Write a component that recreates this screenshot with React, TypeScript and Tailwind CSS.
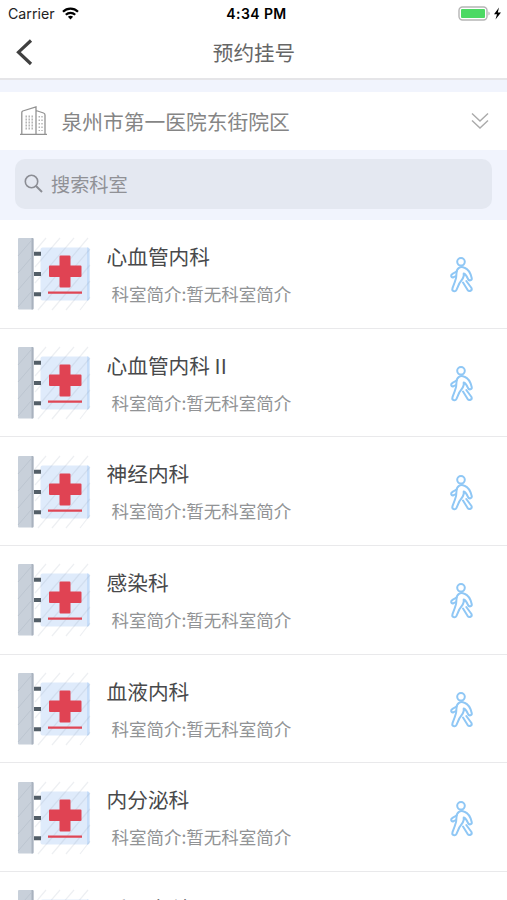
const departments = [
  "心血管内科",
  "心血管内科 II",
  "神经内科",
  "感染科",
  "血液内科",
  "内分泌科",
  "呼吸内科",
];

function StatusBar() {
  return (
    <div className="flex h-[27px] shrink-0 items-center justify-between pl-2 pr-[5px] font-['Inter','Liberation_Sans',sans-serif] text-black">
      <div className="flex w-[120px] items-center gap-[7px]">
        <span className="pt-px text-[14.2px] leading-none text-[#222]">Carrier</span>
        <svg width="17" height="13" viewBox="0 0 17 13" fill="none" stroke="#000" strokeWidth="2.2">
          <path d="M1 4.8C5.2.6 11.8.6 16 4.8" />
          <path d="M3.8 7.8c2.7-2.6 6.7-2.6 9.4 0" />
          <path d="M5.9 9.8c1.5-1.5 3.7-1.5 5.2 0L8.5 12.5z" fill="#000" stroke="none" />
        </svg>
      </div>
      <span className="pl-[3px] text-[14px] font-semibold leading-none tracking-[0.4px]">4:34 PM</span>
      <div className="flex w-[120px] items-center justify-end">
        <svg width="44" height="16" viewBox="0 0 44 16">
          <rect x="1" y="1" width="28" height="13" rx="3.5" fill="#fff" stroke="#b5b5b5" strokeWidth="1.4" />
          <rect x="3" y="3" width="24" height="9" rx="1" fill="#4cd964" />
          <path d="M30.5 5.5v4c1.5-.6 1.5-3.4 0-4z" fill="#aaa" />
          <path d="M41 1.5l-5 6.8h3L37.5 13.5l5.5-7h-3.2z" fill="#000" />
        </svg>
      </div>
    </div>
  );
}

function Header() {
  return (
    <header className="flex h-[53px] shrink-0 items-center border-b-2 border-[#e5e5e8] px-4">
      <svg className="w-[60px]" width="60" height="28" viewBox="0 0 60 28" fill="none" stroke="#404040" strokeWidth="3.2">
        <path d="M15 1.5L2.5 13.2 15 25" />
      </svg>
      <h1 className="flex-1 pl-px text-center text-[20.6px] leading-none text-[#666]">预约挂号</h1>
      <div className="w-[60px]" />
    </header>
  );
}

function BuildingIcon() {
  return (
    <svg width="28" height="30" viewBox="0 0 28 30" fill="none" stroke="#929292" strokeWidth="1.3">
      <path d="M0 28.4h27M1.8 28V6.5Q1.8 5.5 2.8 5L16 1V28M16 4.5l7.5 2.5q1.5.5 1.5 2V28" />
      <path d="M6.2 9.5v15M9.2 9.5v15M12.2 9.5v15" strokeDasharray="2 1" strokeOpacity=".8" />
      <path d="M19.2 10v15M22 10v15" strokeWidth="1" strokeDasharray="1.5 2" />
    </svg>
  );
}

function SignIcon() {
  return (
    <svg className="shrink-0" width="76" height="74" viewBox="0 0 76 74">
      <rect x="23.5" y="10.5" width="49" height="53" rx="2" fill="#dfebfb" />
      <path d="M70 10.5h.5a2 2 0 0 1 2 2v49a2 2 0 0 1-2 2H70z" fill="#c6ddf9" />
      <path
        d="M18 14L29 1M18 30L43 1M18 46L57 1M22 59L71 1M21 73L73 12M35 73L73 28M49 73L73 44M63 73L73 60"
        stroke="#8394a8"
        strokeOpacity=".15"
        strokeWidth="1.2"
      />
      <rect x="1" y="1" width="15.5" height="71.5" rx="1" fill="#c8d0da" />
      <path d="M14.5 1h1a1 1 0 0 1 1 1v69.5a1 1 0 0 1-1 1h-1z" fill="#a9b2be" />
      <path d="M1 19L14 4M1 36l13-15M1 53l13-15M1 70l13-15" stroke="#bcc5d0" strokeWidth="1" />
      <path d="M17 16.8h7M17 37h7M17 57.2h7" stroke="#535e67" strokeWidth="4" />
      <path d="M43.5 18.5h9a1 1 0 0 1 1 1v9h10a1 1 0 0 1 1 1v9.5a1 1 0 0 1-1 1h-10v9.5a1 1 0 0 1-1 1h-9a1 1 0 0 1-1-1V40H33a1 1 0 0 1-1-1v-9.5a1 1 0 0 1 1-1h9.5v-9a1 1 0 0 1 1-1z" fill="#e04353" />
      <path d="M31 55.7h34" stroke="#df4655" strokeWidth="2.2" />
    </svg>
  );
}

function WalkIcon() {
  return (
    <svg width="26" height="37" viewBox="0 0 26 37" fill="none" stroke="#8fc7f5" strokeWidth="2" strokeLinejoin="round" strokeLinecap="round">
      <circle cx="12" cy="4.8" r="3.8" />
      <path d="M7.5 14.5L3.5 16.8C1 18.5 2.2 21 4.6 20.2L7 19.2" />
      <path d="M15.5 10.8c-4-1.8-8 .2-8 5.2 0 4-.5 6.5-1.7 9L3.5 31.2c-1 3.2 2.8 4.2 4 1.6l2.8-6.3c1.5-2.5 3.9-4.5 4.4-7.5V16.5c2 .8 3.2 2.5 4.3 5.5 1 2.3 4.3 1.5 3.7-1-1.2-5-3.2-8.7-7.2-10.2z" />
      <path d="M14 25.5l4.5 7.3c1.8 2.4 5 .7 4-1.8l-5.2-7" />
    </svg>
  );
}

function DepartmentRow({ name }: { name: string }) {
  return (
    <li className="flex h-[108.7px] shrink-0 items-center border-b-[1.5px] border-[#e9e9eb] pl-[17px] pr-8 pt-px">
      <SignIcon />
      <div className="-mt-px ml-[13.5px] flex-1">
        <div className="text-[20.7px] leading-[30px] text-[#48494b]">{name}</div>
        <div className="mt-2.5 pl-[5px] text-[17.5px] leading-[26px] text-[#919395]">科室简介:暂无科室简介</div>
      </div>
      <div className="pt-[3px]">
        <WalkIcon />
      </div>
    </li>
  );
}

export default function App() {
  return (
    <div className="flex h-[900px] w-[507px] flex-col overflow-hidden bg-white font-['Noto_Sans_CJK_SC',sans-serif]">
      <StatusBar />
      <Header />
      <div className="h-3 shrink-0 bg-[#f1f4fd]" />
      <div className="flex h-[58px] shrink-0 items-center pl-5 pr-[18px]">
        <BuildingIcon />
        <span className="ml-[13.5px] flex-1 text-[20.75px] leading-none text-[#858585]">泉州市第一医院东街院区</span>
        <svg width="18" height="18" viewBox="0 0 18 18" fill="none" stroke="#aaa" strokeWidth="1.4">
          <path d="M1 1.5l8 7.5 8-7.5M1 8.5L9 16l8-7.5" />
        </svg>
      </div>
      <div className="h-[70px] shrink-0 bg-[#f1f4fd] px-[15px] pt-[9px]">
        <div className="flex h-[50px] items-center rounded-[10px] bg-[#e4e8f1] pl-[9px]">
          <svg width="20" height="20" viewBox="0 0 20 20" fill="none" stroke="#8b8d94" strokeWidth="1.6">
            <circle cx="7.5" cy="7.5" r="6.2" />
            <path d="M12 12l6 6" strokeWidth="2" />
          </svg>
          <span className="ml-[7px] pt-[2px] text-[19.2px] leading-none text-[#909196]">搜索科室</span>
        </div>
      </div>
      <ul className="flex flex-col">
        {departments.map((name) => (
          <DepartmentRow key={name} name={name} />
        ))}
      </ul>
    </div>
  );
}
